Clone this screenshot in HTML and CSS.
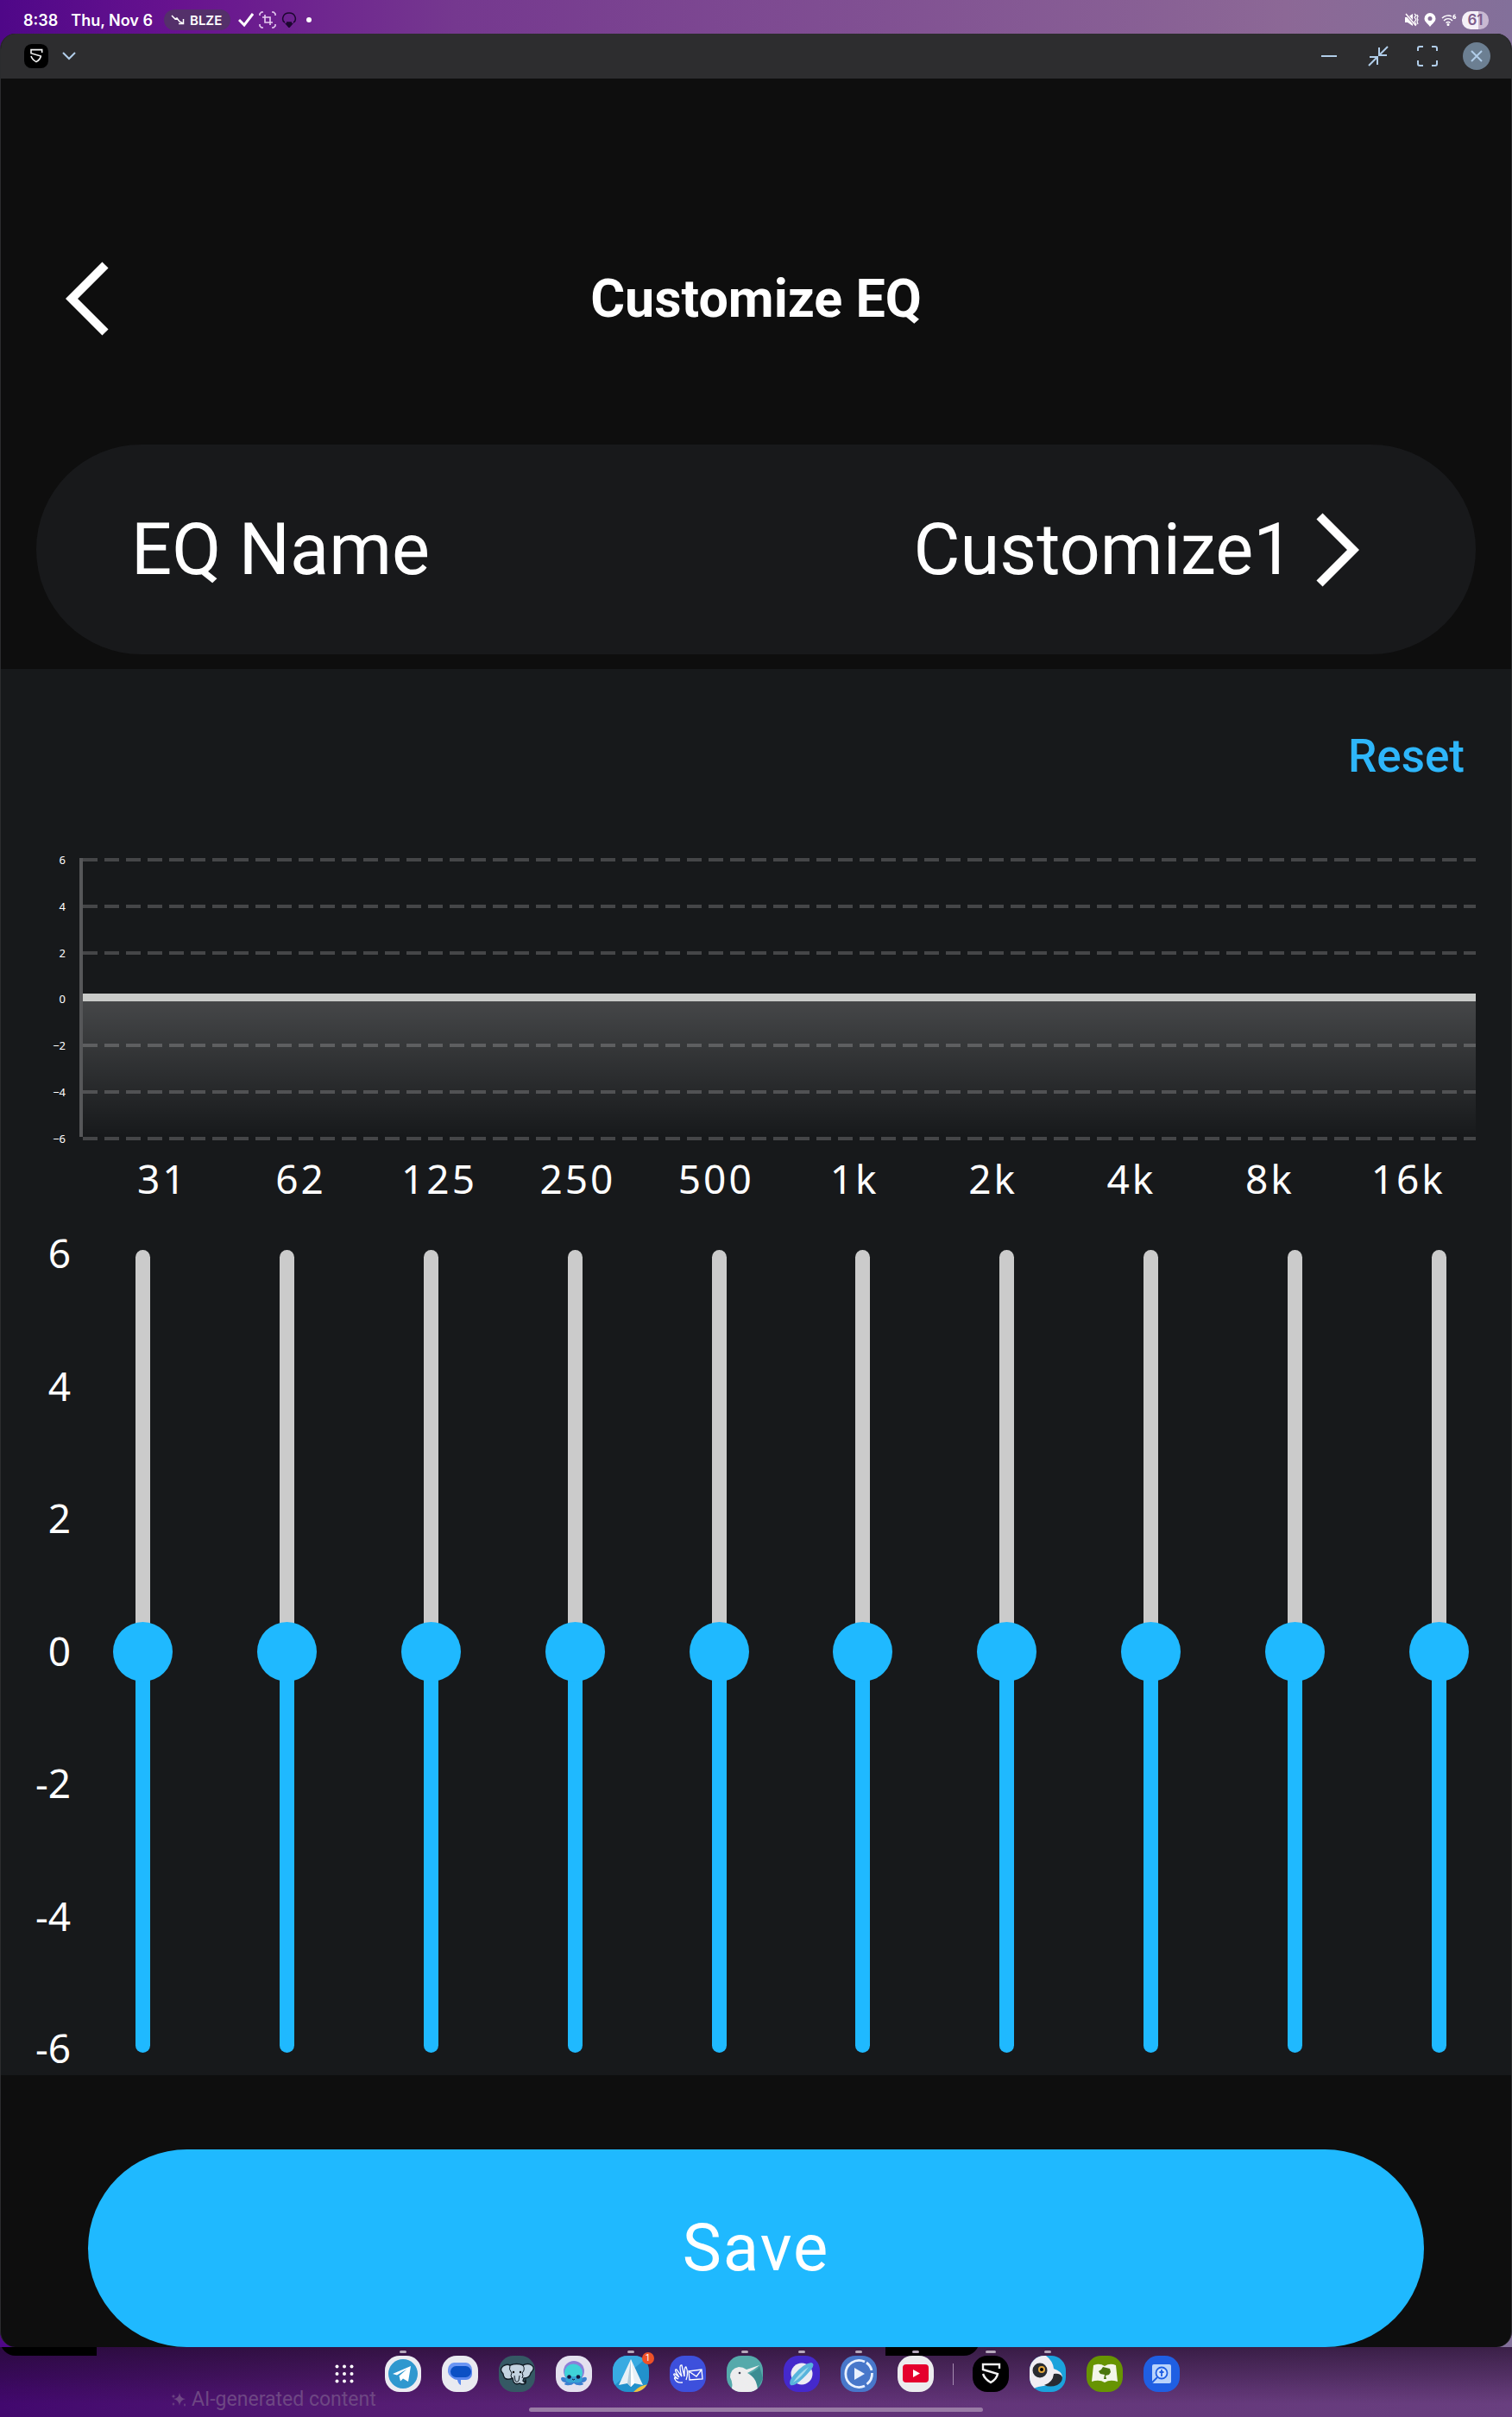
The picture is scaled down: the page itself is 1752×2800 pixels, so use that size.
FILE: index.html
```html
<!DOCTYPE html>
<html lang="en">

<head>
    <meta charset="utf-8">
    <meta name="viewport" content="width=device-width, initial-scale=1">
    <title>Customize EQ</title>
    <link rel="stylesheet" href="styles.css">
</head>

<body>
    <div class="screen">
        <div class="status-bar">
            <span class="status-text">8:38</span>
            <span class="status-text date">Thu, Nov 6</span>
            <span class="ticker">
                <svg width="16" height="12" viewBox="0 0 16 12" fill="none" stroke="#fff" stroke-width="1.5"><path d="M1 1l4 4 2-1 3 4 4 2M9 10.500h5.500V5"/></svg>
                BLZE
            </span>
            <svg class="check" width="18" height="18" viewBox="0 0 18 18" fill="none" stroke="#fff" stroke-width="3"><path d="M1 9l6 6L17 2"/></svg>
            <svg width="20" height="20" viewBox="0 0 20 20" fill="none" stroke="#e6cdf0" stroke-width="1.6"><path d="M1 5V3l2-2h2M15 1h2l2 2v2M19 15v2l-2 2h-2M5 19H3l-2-2v-2"/><path d="M7 4v9h9M4 7h9v9"/></svg>
            <svg class="umbrella" width="18" height="18" viewBox="0 0 18 18" fill="none" stroke="#1c0730" stroke-width="1.5"><path d="M4 12C0 10 1 1 9 1s9 9 5 11"/><path d="M6 12h6M9 17.500l-3.500-4h7z" fill="#1c0730"/></svg>
            <span class="dot"></span>
            <span class="status-right">
                <svg width="16" height="16" viewBox="0 0 16 16" fill="#fff"><path d="M0 5h3l6-4v14l-6-4H0z"/><path d="M0 0l13 15" stroke="#8a6896" stroke-width="3"/><path d="M1 1l11 13" stroke="#fff" stroke-width="1.500"/><path d="M11 1l2 2-2 2 2 3-2 2 2 3-1 2M14 2l1 2-1 2 1 2-1 2 1 3" fill="none" stroke="#fff" stroke-width="1.2"/></svg>
                <svg width="14" height="16" viewBox="0 0 14 16" fill="#fff"><path fill-rule="evenodd" d="M7 0a6.500 6.500 0 0 1 6.500 6.500C13.500 10 10 12 7 16 4 12 .5 10 .5 6.500A6.500 6.500 0 0 1 7 0zm0 4a2.500 2.500 0 1 0 0 5 2.500 2.500 0 0 0 0-5z"/></svg>
                <svg class="wifi" width="18" height="14" viewBox="0 0 18 14" fill="none" stroke="#fff" stroke-width="1.5"><path d="M1 5c3-3 8-4 11-2M3 8c3-3 7-3 10 0M5.500 10.500c2-1.500 3-1.500 5 0"/><path d="M16.500 1c-2 0-3 2-2.500 3.500s3 1 2.700-.5-2-1-2.700 0" stroke-width="1.200"/><circle cx="8" cy="12.500" r=".8" fill="#fff"/></svg>
                <span class="battery">61</span>
            </span>
        </div>

        <div class="window">
            <div class="title-bar">
                <svg width="28" height="28" viewBox="0 0 42 42"><use href="#soundcore"/></svg>
                <button class="bar-btn menu-btn" aria-label="Menu"><svg width="16" height="10" viewBox="0 0 16 10"><path d="M1 1l7 7 7-7"/></svg></button>
                <div class="window-controls">
                    <button class="bar-btn" aria-label="Minimize"><svg width="24" height="24" viewBox="0 0 24 24"><path d="M3 12h18"/></svg></button>
                    <button class="bar-btn" aria-label="Shrink"><svg width="24" height="24" viewBox="0 0 24 24"><path d="M23 1L13 11M13 2v9h9M1 23l10-10M2 13h9v9"/></svg></button>
                    <button class="bar-btn" aria-label="Full screen"><svg width="24" height="24" viewBox="0 0 24 24"><path d="M1 6V3q0-2 2-2h4M17 1h4q2 0 2 2v3M23 17v4q0 2-2 2h-4M7 23H3q-2 0-2-2v-4"/></svg></button>
                    <button class="bar-btn close" aria-label="Close"><svg width="14" height="14" viewBox="0 0 14 14"><path d="M1 1l12 12M13 1L1 13"/></svg></button>
                </div>
            </div>

            <header class="header">
                <button class="back" aria-label="Back"><svg width="50" height="86" viewBox="0 0 50 86"><path d="M46 4L7 43l39 39"/></svg></button>
                <h1>Customize EQ</h1>
            </header>

            <button class="name-row">
                <span>EQ Name</span>
                <span class="name-value">Customize1</span>
                <svg width="50" height="86" viewBox="0 0 50 86"><path d="M4 4l39 39L4 82"/></svg>
            </button>

            <main class="panel">
                <button class="reset" onclick="resetBands()">Reset</button>

                <div class="chart">
                    <div class="chart-scale">
                        <span>6</span><span>4</span><span>2</span><span>0</span><span>−2</span><span>−4</span><span>−6</span>
                    </div>
                    <svg class="plot">
                        <defs>
                            <linearGradient id="fade" x1="0" y1="0" x2="0" y2="1">
                                <stop offset="0" stop-color="#fff" stop-opacity=".2"/>
                                <stop offset="1" stop-color="#fff" stop-opacity="0"/>
                            </linearGradient>
                        </defs>
                        <rect x="0" y="0" width="4" height="323" fill="#565759"/>
                        <svg x="4" width="100%" height="327">
                            <g stroke="#454648" stroke-width="4" stroke-dasharray="17 8">
                                <path d="M0 2h4000M0 56h4000M0 110h4000M0 217h4000M0 271h4000M0 325h4000"/>
                            </g>
                            <rect x="0" y="165" width="100%" height="158" fill="url(#fade)"/>
                            <rect x="0" y="157" width="100%" height="9" fill="#c9cbc9"/>
                        </svg>
                    </svg>
                </div>

                <div class="bands">
                    <label for="b31">31</label>
                    <label for="b62">62</label>
                    <label for="b125">125</label>
                    <label for="b250">250</label>
                    <label for="b500">500</label>
                    <label for="b1k">1k</label>
                    <label for="b2k">2k</label>
                    <label for="b4k">4k</label>
                    <label for="b8k">8k</label>
                    <label for="b16k">16k</label>
                </div>

                <div class="mixer">
                    <div class="mixer-scale">
                        <span>6</span><span>4</span><span>2</span><span>0</span><span>-2</span><span>-4</span><span>-6</span>
                    </div>
                    <div class="sliders">
                        <input type="range" id="b31" min="-6" max="6" value="0">
                        <input type="range" id="b62" min="-6" max="6" value="0">
                        <input type="range" id="b125" min="-6" max="6" value="0">
                        <input type="range" id="b250" min="-6" max="6" value="0">
                        <input type="range" id="b500" min="-6" max="6" value="0">
                        <input type="range" id="b1k" min="-6" max="6" value="0">
                        <input type="range" id="b2k" min="-6" max="6" value="0">
                        <input type="range" id="b4k" min="-6" max="6" value="0">
                        <input type="range" id="b8k" min="-6" max="6" value="0">
                        <input type="range" id="b16k" min="-6" max="6" value="0">
                    </div>
                </div>
            </main>

            <button class="save">Save</button>
        </div>

        <footer class="taskbar">
            <div class="behind"><i class="left"></i><i class="right"></i></div>
            <div class="watermark">
                <svg width="18" height="18" viewBox="0 0 18 18" fill="currentColor"><path d="M10 1q1 7 7 7-6 1-7 8-1-7-7-8 6 0 7-7zM3 2q0 3 3 3-3 0-3 3 0-3-3-3 3 0 3-3zM3 11q0 3 2 3-2 0-2 3 0-3-2-3 2 0 2-3zM16 13l1 2-1 2-1-2z"/></svg>
                AI-generated content
            </div>
            <nav class="dock">
                <a href="#" class="apps" aria-label="All apps">
                    <svg width="22" height="22" viewBox="0 0 22 22" fill="#fff"><circle cx="2.500" cy="2.500" r="2"/><circle cx="11" cy="2.500" r="2"/><circle cx="19.500" cy="2.500" r="2"/><circle cx="2.500" cy="11" r="2"/><circle cx="11" cy="11" r="2"/><circle cx="19.500" cy="11" r="2"/><circle cx="2.500" cy="19.500" r="2"/><circle cx="11" cy="19.500" r="2"/><circle cx="19.500" cy="19.500" r="2"/></svg>
                </a>
                <a href="#" class="app open" aria-label="Telegram">
                    <svg viewBox="0 0 42 42"><rect width="42" height="42" fill="#ececf2"/><circle cx="21" cy="21" r="17" fill="#2f98cf"/><path d="M9 21l21-9-3 18-6-3.500-3 3-1.500-6 9-8-11.500 7z" fill="#fff"/></svg>
                </a>
                <a href="#" class="app" aria-label="Messages">
                    <svg viewBox="0 0 42 42"><rect width="42" height="42" fill="#e9eaf0"/><path d="M14 8h14a8 8 0 0 1 7 8v3a8 8 0 0 1-7 8h-9a11 9 0 0 1-12-8v-3a8 8 0 0 1 7-8z" fill="#6b96f4"/><path d="M10 21a8 8 0 0 1 8-8h9a8 8 0 0 1 8 8 7 7 0 0 1-7 7h-6v6q-3-1-4-6a8 8 0 0 1-8-7z" fill="#5a88ee"/><rect x="10" y="12" width="24" height="13" rx="6.500" fill="#0b50c4"/></svg>
                </a>
                <a href="#" class="app" aria-label="Elephant">
                    <svg viewBox="0 0 42 42"><rect width="42" height="42" fill="#355964"/><path d="M13 11q8-3 15 0 6-3 10 0 5 3-1 9-1 6-8 6l-1 3 2 2 1-3q2 5-4 5l-3-1q-5 2-7-2l-1-4q-10 4-11-5-5-5 0-9 4-3 8-1z" fill="#c3d3e0" stroke="#101b24" stroke-width="1.4"/><path d="M13 11q-2 5 2 9-2 3 0 6M28 11q3 5-1 9 2 3 0 6M18 23l1 6q2 3 4 0l1-6" fill="none" stroke="#101b24" stroke-width="1"/><circle cx="17" cy="19" r="1.200"/><circle cx="25" cy="19" r="1.200"/></svg>
                </a>
                <a href="#" class="app" aria-label="Octopus">
                    <svg viewBox="0 0 42 42"><rect width="42" height="42" fill="#e4e1ef"/><path d="M12 26q-6-3-6 1 1 4 6 4-4 2 0 3 6 1 9-2 3 3 9 2 4-1 0-3 5 0 6-4 0-4-6-1z" fill="#3a7fd0"/><circle cx="21" cy="18" r="12" fill="#8c7fd8"/><circle cx="20.500" cy="20" r="10.500" fill="#3fd2d8"/><path d="M12 24q-2 6 3 7 6 1 6-2 1 3 6 2 5-1 3-7z" fill="#36a3d4"/><circle cx="15.500" cy="24.500" r="2.300" fill="#15143c"/><circle cx="26" cy="24.500" r="2.300" fill="#15143c"/><path d="M19 27q2 2 3 0" fill="none" stroke="#15143c"/></svg>
                </a>
                <a href="#" class="app open" aria-label="Mail">
                    <svg viewBox="0 0 42 42"><rect width="42" height="42" fill="#2291cc"/><path d="M0 0h42L0 36z" fill="#38abe2"/><path d="M24 42q7-8 18-9v9z" fill="#f2bf3e"/><path d="M21 4L7 34l10-2 4 4 4-4 10 2z" fill="#e8f0f6"/><path d="M21 4l-4 28 4 4z" fill="#b2cddd"/><path d="M21 4l4 28-4 4z" fill="#fff"/></svg>
                    <span class="badge">1</span>
                </a>
                <a href="#" class="app" aria-label="Wave">
                    <svg viewBox="0 0 42 42"><rect width="42" height="42" fill="#3d50dc"/><g fill="none" stroke="#fff" stroke-width="1.300"><path d="M15 31q-7 1-9-4-2-3 4 0-8-6-4-6l5 4q-7-10-3-9l6 8q-4-14 0-13l3 13q0-12 2-11 3 7 0 15"/><path d="M22 18l15-2 1 11-15 1-1-10 9 6 6-8"/></g></svg>
                </a>
                <a href="#" class="app open" aria-label="Kiwi">
                    <svg viewBox="0 0 42 42"><rect width="42" height="42" fill="#55aaab"/><path d="M24 22Q36 17 38 12l4 14-6 12z" fill="#3b8d92"/><path d="M4 42q5-8 0-17 0-10 10-12 5 0 9 3l15-5q-7 6-14 9 12 6 12 22z" fill="#ededee"/><circle cx="15" cy="20" r="1.300" fill="#445"/></svg>
                </a>
                <a href="#" class="app open" aria-label="Browser">
                    <svg viewBox="0 0 42 42"><rect width="42" height="42" fill="#4529cc"/><circle cx="21" cy="21" r="12.500" fill="#ececf4"/><path d="M8 34Q5 30 12 22 23 9 32 8q5 1 0 8Q22 28 14 33q-4 2-6 1z" fill="#58b4dc"/><path d="M11 31q9-5 18-18-11 7-18 18z" fill="#a9dced"/></svg>
                </a>
                <a href="#" class="app open" aria-label="Player">
                    <svg viewBox="0 0 42 42"><rect width="42" height="42" fill="#4877ca"/><path d="M28 7a15.500 15.500 0 1 0 0 28M30 8a15.500 15.500 0 0 1 6 9M36.500 20a15.500 15.500 0 0 1-6 13" fill="none" stroke="#eaf1ff" stroke-width="2.800"/><path d="M16 14l12 7-12 7z" fill="#eaf1ff"/></svg>
                </a>
                <a href="#" class="app open" aria-label="YouTube">
                    <svg viewBox="0 0 42 42"><rect width="42" height="42" fill="#ececee"/><rect x="6" y="10" width="30" height="21" rx="4" fill="#e5002d"/><path d="M18 16l8 4.500-8 4.500z" fill="#fff"/></svg>
                </a>
                <span class="divider"></span>
                <a href="#" class="app open active" aria-label="Soundcore">
                    <svg viewBox="0 0 42 42"><symbol id="soundcore" viewBox="0 0 42 42"><rect width="42" height="42" rx="13"/><path d="M31 15v-5H12v6l17 5q-1 6-8 10-7-4-9-10" fill="none" stroke="#f2f2f2" stroke-width="2.400"/></symbol><use href="#soundcore"/></svg>
                </a>
                <a href="#" class="app open" aria-label="Lemur">
                    <svg viewBox="0 0 42 42"><rect width="42" height="42" fill="#1ba3dc"/><path d="M0 0h19q8 6 9 15 9 3 10 9-2 8-13 10-12 1-18 3l-7 5z" fill="#f0edf3"/><path d="M28 21q8-1 10 4 0 6-6 9-8 3-15 0 10-3 11-13z" fill="#292b31"/><circle cx="12" cy="17" r="8.500" fill="#292b31"/><circle cx="14" cy="16" r="4" fill="#e3a63b"/><circle cx="14" cy="16" r="2"/></svg>
                </a>
                <a href="#" class="app" aria-label="Study Bible">
                    <svg viewBox="0 0 42 42"><rect width="42" height="42" fill="#679402"/><path d="M8 11q7-3 13 1 6-4 13-1l2 19q-9-3-15 1-6-4-15-1z" fill="#f3f5ec"/><path d="M20 27l1-5-5-1-2-3 3-2 2-3 4 1 4 1 1 4-2 3-4 1 1 4z" fill="#4b7610"/></svg>
                </a>
                <a href="#" class="app" aria-label="Bible search">
                    <svg viewBox="0 0 42 42"><rect width="42" height="42" fill="#1f5fe3"/><rect x="10" y="10" width="22" height="22" rx="2" fill="#b9d3fb"/><circle cx="21" cy="20" r="6.500" fill="#cfe1ff" stroke="#1f5fe3" stroke-width="1.800"/><path d="M16 25l-6 6M21 16v8M18.500 19h5" fill="none" stroke="#1f5fe3" stroke-width="1.800"/></svg>
                </a>
            </nav>
            <div class="nav-handle"></div>
        </footer>
    </div>

    <script>
        var sliders = document.querySelectorAll(".sliders input");

        function paint(slider) {
            var level = (Number(slider.value) + 6) / 12 * 100;
            slider.style.setProperty("--level", level + "%");
        }

        function resetBands() {
            sliders.forEach(function (slider) {
                slider.value = 0;
                paint(slider);
            });
        }

        sliders.forEach(function (slider) {
            slider.addEventListener("input", function () { paint(slider); });
        });
    </script>
</body>

</html>
```
FILE: styles.css
```css
* {
    box-sizing: border-box;
}

body {
    margin: 0;
    background-color: #4d176c;
    color: #fff;
    font-family: Roboto, "Noto Sans", sans-serif;
}

button {
    border: none;
    padding: 0;
    background: none;
    color: inherit;
    font: inherit;
    cursor: pointer;
}

svg {
    display: block;
    flex: none;
}

.screen {
    display: flex;
    flex-direction: column;
    min-height: 100vh;
    isolation: isolate;
    background: linear-gradient(90deg, #4f0788 0%, #68138f 12%, #75388f 30%, #8c6896 85%, #83709a 100%);
}

/* status bar */

.status-bar {
    display: flex;
    align-items: center;
    height: 39px;
    padding: 7px 27px 0;
    font-family: Inter, sans-serif;
    font-weight: 600;
}

.status-text {
    font-size: 18px;
}

.date {
    margin-left: 15px;
}

.ticker {
    display: flex;
    align-items: center;
    gap: 6px;
    height: 24px;
    margin: 0 9px 0 13px;
    padding: 0 10px 0 8px;
    border-radius: 12px;
    background-color: #54306a;
    font-size: 15px;
}

.check {
    margin-right: 6px;
}

.umbrella {
    margin: 0 11px 0 6px;
}

.dot {
    width: 6px;
    height: 6px;
    border-radius: 50%;
    background-color: #fff;
}

.status-right {
    display: flex;
    align-items: center;
    gap: 6px;
    margin-left: auto;
}

.battery {
    width: 31px;
    height: 21px;
    border-radius: 10px;
    background: linear-gradient(90deg, #f5f0f8 60%, #c9b9d2 60%);
    color: #7d5d8c;
    font-size: 17px;
    line-height: 21px;
    text-align: center;
}

/* app window */

.window {
    display: flex;
    flex: 1;
    flex-direction: column;
    overflow: hidden;
    border: solid #2b2c2e;
    border-width: 0 1px;
    border-radius: 18px;
    background-color: #0e0e0e;
}

.title-bar {
    display: flex;
    align-items: center;
    height: 52px;
    padding: 0 24px 0 27px;
    background-color: #2d2d2f;
}

.bar-btn {
    display: flex;
    align-items: center;
    justify-content: center;
}

.bar-btn path {
    fill: none;
    stroke: #b1cde9;
    stroke-width: 2;
}

.menu-btn {
    margin-left: 16px;
}

.window-controls {
    display: flex;
    gap: 33px;
    margin-left: auto;
}

.close {
    width: 32px;
    height: 32px;
    margin-left: -4px;
    border-radius: 50%;
    background-color: #6c7f92;
}

.header {
    display: grid;
    grid-template-columns: 1fr auto 1fr;
    align-items: center;
    padding: 212px 75px 126px;
}

.back {
    justify-self: start;
}

.back path,
.name-row path {
    fill: none;
    stroke: #fff;
    stroke-width: 10;
}

h1 {
    margin: 0;
    font-size: 61px;
    font-weight: 700;
    line-height: 72px;
}

.name-row {
    display: flex;
    align-items: center;
    margin: 0 41px 17px;
    padding: 72px 135px 72px 110px;
    border-radius: 122px;
    background-color: #18191b;
    font-size: 83px;
    line-height: 99px;
}

.name-value {
    margin: 0 26px 0 auto;
}

/* equalizer */

.panel {
    display: flex;
    flex: 1;
    flex-direction: column;
    padding-top: 70px;
    background-color: #17191b;
}

.reset {
    align-self: flex-end;
    margin-right: 54px;
    color: #2eb6fa;
    font-size: 53px;
    font-weight: 500;
    line-height: 62px;
}

.chart {
    display: flex;
    align-items: center;
    gap: 16px;
    margin-top: 81px;
    padding-right: 41px;
}

.chart-scale {
    display: flex;
    flex-direction: column;
    justify-content: space-between;
    width: 75px;
    height: 339px;
    font-family: "Noto Sans", sans-serif;
    font-size: 13px;
    line-height: 16px;
    text-align: right;
}

.plot {
    flex: 1;
    height: 327px;
}

.bands {
    display: grid;
    grid-template-columns: repeat(10, 1fr);
    margin-top: 10px;
    padding: 0 39px 0 107px;
    font-family: "Noto Sans", sans-serif;
    font-size: 46px;
    line-height: 56px;
    letter-spacing: 3px;
    text-align: center;
}

.mixer {
    display: flex;
    flex: 1;
    margin-top: 28px;
}

.mixer-scale {
    display: flex;
    flex-direction: column;
    justify-content: space-between;
    width: 81px;
    padding-bottom: 2px;
    font-family: "Noto Sans", sans-serif;
    font-size: 46px;
    line-height: 60px;
    text-align: right;
}

.sliders {
    display: grid;
    flex: 1;
    grid-template-columns: repeat(10, 1fr);
    justify-items: center;
    padding: 27px 0 26px;
}

.sliders input {
    --level: 50%;
    width: 17px;
    height: 930px;
    margin: 0;
    appearance: none;
    background: none;
    direction: rtl;
    writing-mode: vertical-lr;
}

.sliders input::-webkit-slider-runnable-track {
    width: 17px;
    border-radius: 9px;
    background: linear-gradient(0deg, #1fb9ff var(--level), #cbcbcb var(--level));
}

.sliders input::-webkit-slider-thumb {
    width: 69px;
    height: 69px;
    margin-left: -26px;
    appearance: none;
    border-radius: 50%;
    background-color: #1fb9ff;
}

.save {
    margin: 86px 101px 0;
    border-radius: 115px;
    background-color: #1fb9ff;
    font-size: 76px;
    line-height: 229px;
    letter-spacing: 2px;
}

/* taskbar */

.taskbar {
    position: relative;
    height: 82px;
    padding-top: 10px;
    background: linear-gradient(90deg, #42086e 0%, #551c73 25%, #613278 55%, #693f7f 100%);
}

.taskbar::before {
    content: "";
    position: absolute;
    inset: 0;
    background: linear-gradient(#1c0b2299, #1c0b2200 80%);
}

.behind {
    position: absolute;
    top: -18px;
    left: 0;
    z-index: -1;
    width: 100%;
    height: 28px;
}

.behind i {
    position: absolute;
    top: 0;
    left: 0;
    width: 112px;
    height: 28px;
    border-bottom-left-radius: 18px;
    background-color: #000;
}

.taskbar .behind {
    z-index: 0;
    clip-path: inset(18px 0 0 0);
}

.behind .right {
    left: 1026px;
    width: 109px;
    border-radius: 0 0 18px 0;
}

.watermark {
    position: absolute;
    bottom: 8px;
    left: 198px;
    display: flex;
    align-items: center;
    gap: 6px;
    color: #6e4783;
    font-size: 23px;
    line-height: 26px;
}

.dock {
    position: relative;
    display: flex;
    align-items: center;
    justify-content: center;
    gap: 24px;
    padding-left: 2px;
}

.apps {
    margin-right: 12px;
}

.app {
    position: relative;
    width: 42px;
    height: 42px;
}

.app svg {
    width: 42px;
    height: 42px;
    border-radius: 17px;
}

.open::before {
    content: "";
    position: absolute;
    top: -6px;
    left: 17px;
    width: 8px;
    height: 3px;
    border-radius: 2px;
    background-color: #b5a8bb;
}

.active::before {
    left: 15px;
    width: 12px;
}

.badge {
    position: absolute;
    top: -4px;
    right: -6px;
    width: 14px;
    height: 14px;
    border-radius: 50%;
    background-color: #ee5127;
    color: #fff;
    font-size: 10px;
    line-height: 14px;
    text-align: center;
}

.divider {
    width: 1px;
    height: 25px;
    margin: 0 -2px;
    background-color: #a58cb0;
}

.nav-handle {
    position: relative;
    width: 30%;
    height: 5px;
    margin: 18px auto 0;
    border-radius: 3px;
    background-color: #9a7ca6;
}
```
